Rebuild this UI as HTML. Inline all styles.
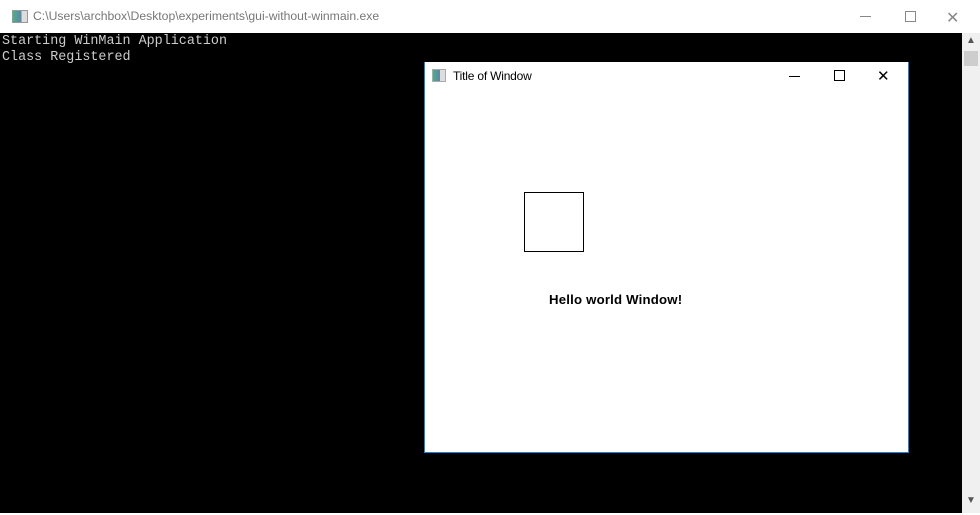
<!DOCTYPE html><html><head><style>
body{margin:0;width:980px;height:515px;overflow:hidden;background:#fff;position:relative;font-family:"Liberation Sans",sans-serif}
.a{position:absolute}
</style></head><body>
<div class="a" style="left:0;top:0;width:980px;height:33px;background:#fff"></div>
<div class="a" style="left:12px;top:10px;width:14px;height:11px;border:1px solid #999;background:linear-gradient(90deg,#5a8 0,#58a 60%,#ddd 60%)"></div>
<div class="a" style="left:33px;top:9px;font-size:12.2px;color:#777">C:\Users\archbox\Desktop\experiments\gui-without-winmain.exe</div>
<div class="a" style="left:860px;top:16px;width:11px;height:1px;background:#888"></div>
<div class="a" style="left:905px;top:11px;width:9px;height:9px;border:1px solid #888"></div>
<div class="a" style="left:946px;top:8px;font-size:16px;color:#888">✕</div>
<div class="a" style="left:0;top:33px;width:962px;height:480px;background:#000"></div>
<div class="a" style="left:962px;top:33px;width:18px;height:480px;background:#f0f0f0"></div>
<div class="a" style="left:964px;top:51px;width:14px;height:15px;background:#cdcdcd"></div>
<div class="a" style="left:966px;top:35px;font-size:10px;color:#555">▲</div>
<div class="a" style="left:966px;top:495px;font-size:10px;color:#555">▼</div>
<div class="a" style="left:2px;top:34px;font-family:'Liberation Mono',monospace;font-size:13.4px;line-height:16px;color:#ccc;white-space:pre">Starting WinMain Application
Class Registered</div>
<div class="a" style="left:424px;top:62px;width:483px;height:390px;background:#fff;border:1px solid #1883d7;border-top:none"></div>
<div class="a" style="left:432px;top:69px;width:12px;height:11px;border:1px solid #aaa;background:linear-gradient(90deg,#5a8 0,#58a 60%,#ddd 60%)"></div>
<div class="a" style="left:453px;top:69px;font-size:12px;color:#000;letter-spacing:-0.2px">Title of Window</div>
<div class="a" style="left:789px;top:76px;width:11px;height:1px;background:#000"></div>
<div class="a" style="left:834px;top:70px;width:9px;height:9px;border:1px solid #000"></div>
<div class="a" style="left:877px;top:67px;font-size:15px;color:#000">✕</div>
<div class="a" style="left:524px;top:192px;width:58px;height:58px;border:1px solid #000"></div>
<div class="a" style="left:549px;top:292px;font-size:13.2px;letter-spacing:0.2px;font-weight:bold;color:#000">Hello world Window!</div>
</body></html>
